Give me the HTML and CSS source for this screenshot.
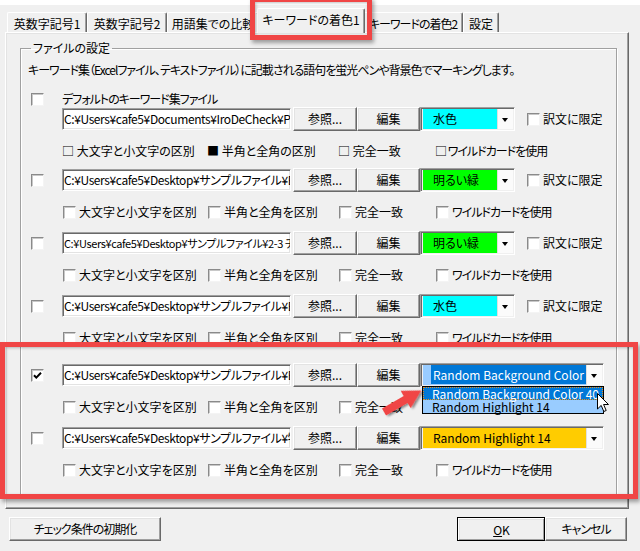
FILE: index.html
```html
<!DOCTYPE html>
<html lang="ja">
<head>
<meta charset="utf-8">
<title>キーワードの着色1</title>
<link rel="stylesheet" href="styles.css">
</head>
<body>
<div class="topstrip"></div>
<div class="tabs">
  <div class="tab t1">英数字記号1</div>
  <div class="tab t2">英数字記号2</div>
  <div class="tab t3">用語集での比較</div>
  <div class="tab sel">キーワードの着色1</div>
  <div class="tab t5 kana">キーワードの着色2</div>
  <div class="tab t6">設定</div>
</div>
<div class="panel">
  <fieldset class="group">
    <legend>ファイルの設定</legend>
    <p class="desc kana">キーワード集（Excelファイル、テキストファイル）に記載される語句を蛍光ペンや背景色でマーキングします。</p>

    <div class="entry first">
      <span class="cb"></span>
      <div class="lbl kana">デフォルトのキーワード集ファイル</div>
      <div class="fileline">
        <div class="path">C:¥Users¥cafe5¥Documents¥IroDeCheck¥Profile</div>
        <div class="btn ref">参照...</div>
        <div class="btn edit">編集</div>
        <div class="combo cyan"><span class="val">水色</span><span class="drop"></span></div>
        <span class="cb yk"></span><span class="yklbl">訳文に限定</span>
      </div>
      <div class="opts glyphs">
        <span>□ 大文字と小文字の区別</span>
        <span>■ 半角と全角の区別</span>
        <span>□ 完全一致</span>
        <span class="kana">□ ワイルドカードを使用</span>
      </div>
    </div>

    <div class="entry r2">
      <span class="cb"></span>
      <div class="fileline">
        <div class="path">C:¥Users¥cafe5¥Desktop¥サンプルファイル¥Excel</div>
        <div class="btn ref">参照...</div>
        <div class="btn edit">編集</div>
        <div class="combo lime"><span class="val">明るい緑</span><span class="drop"></span></div>
        <span class="cb yk"></span><span class="yklbl">訳文に限定</span>
      </div>
      <div class="opts">
        <span><i class="cb"></i>大文字と小文字を区別</span>
        <span><i class="cb"></i>半角と全角を区別</span>
        <span><i class="cb"></i>完全一致</span>
        <span class="kana"><i class="cb"></i>ワイルドカードを使用</span>
      </div>
    </div>

    <div class="entry">
      <span class="cb"></span>
      <div class="fileline">
        <div class="path small">C:¥Users¥cafe5¥Desktop¥サンプルファイル¥2-3 チェック</div>
        <div class="btn ref">参照...</div>
        <div class="btn edit">編集</div>
        <div class="combo lime"><span class="val">明るい緑</span><span class="drop"></span></div>
        <span class="cb yk"></span><span class="yklbl">訳文に限定</span>
      </div>
      <div class="opts">
        <span><i class="cb"></i>大文字と小文字を区別</span>
        <span><i class="cb"></i>半角と全角を区別</span>
        <span><i class="cb"></i>完全一致</span>
        <span class="kana"><i class="cb"></i>ワイルドカードを使用</span>
      </div>
    </div>

    <div class="entry">
      <span class="cb"></span>
      <div class="fileline">
        <div class="path">C:¥Users¥cafe5¥Desktop¥サンプルファイル¥Excel</div>
        <div class="btn ref">参照...</div>
        <div class="btn edit">編集</div>
        <div class="combo cyan"><span class="val">水色</span><span class="drop"></span></div>
        <span class="cb yk"></span><span class="yklbl">訳文に限定</span>
      </div>
      <div class="opts">
        <span><i class="cb"></i>大文字と小文字を区別</span>
        <span><i class="cb"></i>半角と全角を区別</span>
        <span><i class="cb"></i>完全一致</span>
        <span class="kana"><i class="cb"></i>ワイルドカードを使用</span>
      </div>
    </div>

    <div class="entry r5">
      <span class="cb on"><svg viewBox="0 0 11 11" width="11" height="11"><path d="M2 5.2 L4.3 7.6 L9 2.8" fill="none" stroke="#000" stroke-width="2"/></svg></span>
      <div class="fileline">
        <div class="path">C:¥Users¥cafe5¥Desktop¥サンプルファイル¥Excel</div>
        <div class="btn ref">参照...</div>
        <div class="btn edit">編集</div>
        <div class="combo wide sky">
          <span class="val"><span class="hl">Random Background Color 40</span></span><span class="drop"></span>
          <div class="list">
            <div class="item cur">Random Background Color 40</div>
            <div class="item">Random Highlight 14</div>
          </div>
        </div>
      </div>
      <div class="opts">
        <span><i class="cb"></i>大文字と小文字を区別</span>
        <span><i class="cb"></i>半角と全角を区別</span>
        <span><i class="cb"></i>完全一致</span>
        <span class="kana"><i class="cb"></i>ワイルドカードを使用</span>
      </div>
    </div>

    <div class="entry">
      <span class="cb"></span>
      <div class="fileline">
        <div class="path">C:¥Users¥cafe5¥Desktop¥サンプルファイル¥特許</div>
        <div class="btn ref">参照...</div>
        <div class="btn edit">編集</div>
        <div class="combo wide amber"><span class="val">Random Highlight 14</span><span class="drop"></span></div>
      </div>
      <div class="opts">
        <span><i class="cb"></i>大文字と小文字を区別</span>
        <span><i class="cb"></i>半角と全角を区別</span>
        <span><i class="cb"></i>完全一致</span>
        <span class="kana"><i class="cb"></i>ワイルドカードを使用</span>
      </div>
    </div>
  </fieldset>
</div>
<div class="footer">
  <div class="btn init kana">チェック条件の初期化</div>
  <div class="right">
    <div class="btn ok"><u>O</u>K</div>
    <div class="btn cancel kana">キャンセル</div>
  </div>
</div>

<div class="mark mark-tab"></div>
<div class="mark mark-rows"></div>
<svg class="arrow" width="60" height="40" viewBox="0 0 60 40">
  <defs>
    <filter id="sh" x="-30%" y="-30%" width="160%" height="160%">
      <feDropShadow dx="1.5" dy="2" stdDeviation="1.2" flood-color="#000" flood-opacity="0.45"/>
    </filter>
  </defs>
  <g transform="translate(6 29) rotate(-30)" filter="url(#sh)">
    <polygon points="0,-4 25,-4 25,-10 43,0 25,10 25,4 0,4" fill="#f04545"/>
  </g>
</svg>
<svg class="cursor" width="13" height="20" viewBox="0 0 13 20">
  <path d="M0.5 0.5 L0.5 16 L4.2 12.4 L6.8 18.5 L9.2 17.5 L6.6 11.5 L11.5 11.5 Z" fill="#fff" stroke="#000" stroke-width="1"/>
</svg>
</body>
</html>
```
FILE: styles.css
```css
* { box-sizing: border-box; }
html, body { margin: 0; padding: 0; }
body {
  width: 640px;
  height: 551px;
  overflow: hidden;
  position: relative;
  background: #f0f0f0;
  color: #000;
  font-family: "Noto Sans CJK JP", "Noto Sans", sans-serif;
  font-size: 12px;
  line-height: 16px;
  font-feature-settings: "palt";
}
.kana { letter-spacing: -1px; }

.topstrip { height: 5px; background: #fff; }

/* tabs */
.tabs {
  display: flex;
  align-items: flex-end;
  height: 27px;
  padding-left: 7px;
  position: relative;
  z-index: 2;
}
.tab {
  height: 20px;
  padding-top: 3px;
  text-align: center;
  white-space: nowrap;
  border-top: 1px solid #fff;
  border-left: 1px solid #fff;
  border-right: 1px solid #696969;
  box-shadow: inset -1px 0 0 #a0a0a0;
  border-radius: 2px 2px 0 0;
}
.t1 { width: 80px; }
.t2 { width: 80px; }
.t3 { width: 92px; }
.tab.sel {
  width: 108px;
  height: 25px;
  margin: 0 -2px -1px;
  padding-top: 3px;
  background: #f0f0f0;
  position: relative;
}
.t5 { width: 100px; }
.t6 { width: 36px; }

/* panel */
.panel {
  margin-left: 5px;
  width: 624px;
  border: 1px solid;
  border-color: #fff #696969 #696969 #fff;
  box-shadow: inset -1px -1px 0 #a0a0a0, inset 1px 1px 0 #e3e3e3;
  padding: 7px 11px 11px 14px;
}
.group {
  margin: 0;
  min-width: 0;
  border: 1px solid #a0a0a0;
  box-shadow: 1px 1px 0 #fff, inset 1px 1px 0 #fff;
  padding: 6px 10px 18px 10px;
}
.group legend {
  padding: 0 2px;
  margin-left: 0;
  line-height: 16px;
}
.desc { margin: 0 0 0 -3px; white-space: nowrap; }

/* entries */
.entry {
  display: grid;
  grid-template-columns: 31px 1fr;
  align-items: center;
  margin-top: 11px;
}
.entry.first { margin-top: 13px; }
.entry.r2 { margin-top: 9px; }
.entry.r5 { margin-top: 17px; }
.entry > .cb { grid-column: 1; grid-row: 1; }
.entry .lbl { grid-column: 2; grid-row: 1; white-space: nowrap; }
.entry .fileline { grid-column: 2; }
.entry .opts { grid-column: 2; margin-top: 12px; }
.entry:not(.first) .fileline { grid-row: 1; }

.cb {
  display: inline-block;
  width: 13px;
  height: 13px;
  background: #fff;
  border: 1px solid;
  border-color: #8a8a8a #f4f4f4 #f4f4f4 #8a8a8a;
  box-shadow: inset 1px 1px 0 #c8c8c8;
  vertical-align: middle;
  position: relative;
}
.cb svg { position: absolute; left: 0; top: 0; }

.fileline {
  display: flex;
  align-items: center;
  height: 24px;
}
.path {
  width: 229px;
  height: 22px;
  margin-right: 2px;
  padding: 2px 0 0 1px;
  background: #fff;
  border: 1px solid;
  border-color: #a0a0a0 #fff #fff #a0a0a0;
  box-shadow: inset 1px 1px 0 #696969, inset -1px -1px 0 #e3e3e3;
  white-space: nowrap;
  overflow: hidden;
  letter-spacing: -0.4px;
}
.path.small { font-size: 11px; }

.btn {
  height: 24px;
  display: flex;
  align-items: center;
  justify-content: center;
  background: #f0f0f0;
  border: 1px solid;
  border-color: #fff #696969 #696969 #fff;
  box-shadow: inset -1px -1px 0 #a0a0a0, inset 1px 1px 0 #e3e3e3;
  white-space: nowrap;
}
.btn.ref { width: 64px; }
.btn.edit { width: 63px; }

.combo {
  width: 95px;
  height: 24px;
  display: flex;
  position: relative;
  border: 1px solid;
  border-color: #a0a0a0 #fff #fff #a0a0a0;
  box-shadow: inset 1px 1px 0 #696969;
  padding: 1px 1px 1px 2px;
}
.combo.wide { width: 184px; }
.combo .val {
  flex: 1;
  min-width: 0;
  padding: 2px 0 0 10px;
  white-space: nowrap;
  overflow: hidden;
}
.combo .drop {
  width: 16px;
  background: #fbfbfb;
  border-left: 1px solid #e0e0e0;
  position: relative;
}
.combo .drop::after {
  content: "";
  position: absolute;
  left: 4px;
  top: 9px;
  border-left: 3.5px solid transparent;
  border-right: 3.5px solid transparent;
  border-top: 4px solid #000;
}
.cyan .val { background: #00ffff; }
.lime .val { background: #00ff00; }
.sky .val { background: #99ccff; padding-left: 8px; }
.amber .val { background: #ffcc00; }
.hl { background: #0078d7; color: #fff; padding: 1px 2px 1px 2px; }

.list {
  position: absolute;
  left: 1px;
  top: 100%;
  width: 182px;
  border: 1px solid #000;
  background: #99ccff;
  z-index: 3;
}
.item {
  height: 13px;
  line-height: 13px;
  padding-left: 9px;
  white-space: nowrap;
}
.item.cur {
  background: #0078d7;
  color: #fff;
  outline: 1px dotted #e8901c;
  outline-offset: -1px;
}

.cb.yk { margin-left: 12px; }
.yklbl { margin-left: 3px; white-space: nowrap; }

.opts {
  display: grid;
  grid-template-columns: 145px 131px 97px auto;
  height: 16px;
  white-space: nowrap;
}
.opts span { display: flex; align-items: center; }
.opts .cb { margin: 0 3px 0 1px; }

/* footer */
.footer {
  display: flex;
  justify-content: space-between;
  margin-top: 8px;
  padding: 0 13px 0 9px;
}
.footer .right { display: flex; }
.btn.init { width: 152px; }
.btn.ok {
  width: 88px;
  outline: 1px solid #000;
  outline-offset: -1px;
  border-width: 2px 1px 1px 2px;
}
.btn.cancel { width: 82px; }

/* annotation overlays */
.mark {
  position: absolute;
  border: 5px solid #f04545;
  box-shadow: 2px 3px 4px rgba(0,0,0,0.35), inset 1px 1px 3px rgba(0,0,0,0.25);
  z-index: 5;
}
.mark-tab { left: 250px; top: -3px; width: 122px; height: 43px; }
.mark-rows { left: 0; top: 342px; width: 638px; height: 157px; }
.arrow { position: absolute; left: 378px; top: 383px; z-index: 6; overflow: visible; }
.cursor { position: absolute; left: 597px; top: 393px; z-index: 7; }
```
